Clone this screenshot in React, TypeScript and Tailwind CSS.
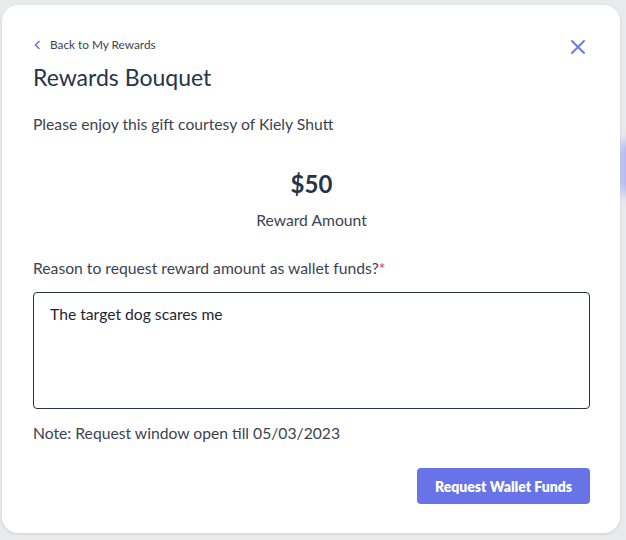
import React from "react";

export default function App() {
  return (
    <div
      className="relative w-[626px] h-[540px] bg-[#e9eaec] overflow-hidden"
      style={{ fontFamily: "Lato, 'Open Sans', sans-serif" }}
    >
      <div className="absolute right-[-14px] top-[140px] w-[20px] h-[55px] rounded-full bg-[#aab0f5] blur-[6px]" />
      <div className="relative ml-[2px] mt-[5px] w-[618px] h-[528px] bg-white rounded-[16px] shadow-[0_1px_3px_rgba(0,0,0,0.12)] pl-[31px] pr-[30px] pt-[29px] flex flex-col">
        <div className="flex items-center justify-between h-[22px]">
          <div className="flex items-center gap-[8px] text-[11.8px] text-[#3b4352]">
            <svg width="9" height="10" viewBox="0 0 9 10" fill="none">
              <path d="M6 1.5 L2.5 5 L6 8.5" stroke="#6b76e6" strokeWidth="1.6" strokeLinecap="round" strokeLinejoin="round" />
            </svg>
            <span>Back to My Rewards</span>
          </div>
          <svg width="16" height="16" viewBox="0 0 16 16" className="mr-[4px] mt-[4px]">
            <path d="M2 2 L14 14 M14 2 L2 14" stroke="#6b7be8" strokeWidth="2" strokeLinecap="round" />
          </svg>
        </div>
        <h1 className="mt-[7px] text-[23px] leading-[28px] text-[#26344a]">Rewards Bouquet</h1>
        <p className="mt-[23px] text-[15.7px] leading-[20px] text-[#3b4352]">Please enjoy this gift courtesy of Kiely Shutt</p>
        <div className="mt-[36px] text-center text-[24px] leading-[28px] font-bold text-[#26344a]">$50</div>
        <div className="mt-[12px] text-center text-[15.7px] leading-[20px] text-[#3b4352]">Reward Amount</div>
        <label className="mt-[28px] text-[15.7px] leading-[20px] text-[#3b4352]">
          Reason to request reward amount as wallet funds?<span className="text-[#e0314b]">*</span>
        </label>
        <div className="mt-[14px] h-[117px] border border-[#26344a] rounded-[4px] px-[16px] pt-[11px] text-[15.7px] leading-[20px] text-[#1f2633]">
          The target dog scares me
        </div>
        <p className="mt-[14px] text-[15.7px] leading-[20px] text-[#3b4352]">Note: Request window open till 05/03/2023</p>
        <div className="mt-[25px] flex justify-end">
          <button className="w-[173px] h-[36px] rounded-[4px] bg-[#6873e8] text-white text-[14px] font-extrabold">
            Request Wallet Funds
          </button>
        </div>
      </div>
    </div>
  );
}
